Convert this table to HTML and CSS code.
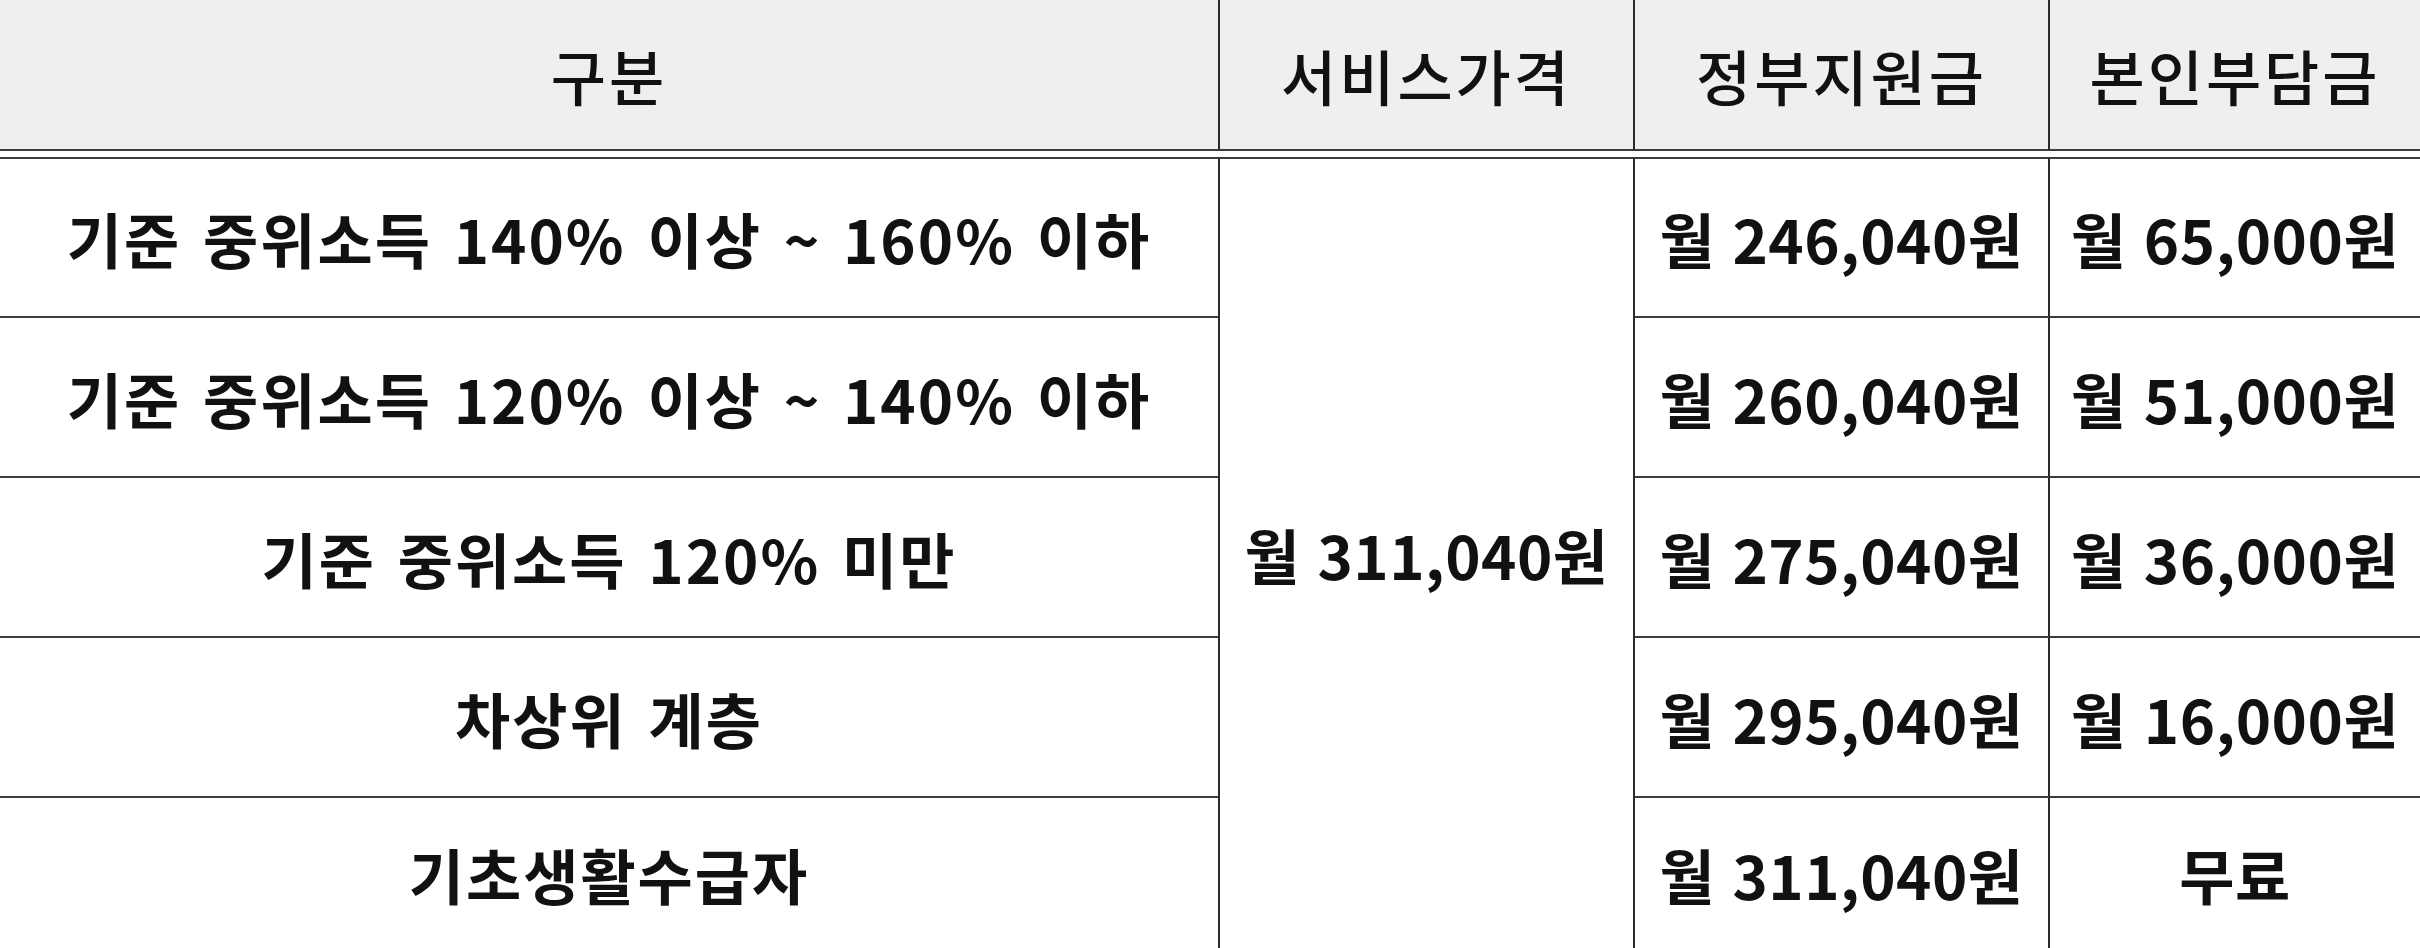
FILE: index.html
```html
<!DOCTYPE html>
<html lang="ko">
<head>
<meta charset="utf-8">
<title>서비스 가격표</title>
<link rel="stylesheet" href="styles.css">
</head>
<body>
<div class="price-table">
  <div class="cell head">구분</div>
  <div class="cell head col-price">서비스가격</div>
  <div class="cell head col-gov">정부지원금</div>
  <div class="cell head">본인부담금</div>

  <div class="gap"></div>

  <div class="cell body first wide">기준 중위소득 140% 이상 ~ 160% 이하</div>
  <div class="cell body merged col-price">월 311,040원</div>
  <div class="cell body first col-gov">월 246,040원</div>
  <div class="cell body first">월 65,000원</div>

  <div class="cell body wide">기준 중위소득 120% 이상 ~ 140% 이하</div>
  <div class="cell body col-gov">월 260,040원</div>
  <div class="cell body">월 51,000원</div>

  <div class="cell body wide">기준 중위소득 120% 미만</div>
  <div class="cell body col-gov">월 275,040원</div>
  <div class="cell body">월 36,000원</div>

  <div class="cell body wide">차상위 계층</div>
  <div class="cell body col-gov">월 295,040원</div>
  <div class="cell body">월 16,000원</div>

  <div class="cell body last wide">기초생활수급자</div>
  <div class="cell body last col-gov">월 311,040원</div>
  <div class="cell body last">무료</div>
</div>
</body>
</html>
```
FILE: styles.css
```css
html, body {
  margin: 0;
  padding: 0;
  background: #ffffff;
  overflow: hidden;
}

.price-table {
  display: grid;
  width: 2420px;
  grid-template-columns: 1218px 417px 415px 1fr;
  grid-template-rows: 151px 6px 161px 160px 160px 160px 150px;
  font-family: "Noto Sans CJK KR", "Noto Sans", sans-serif;
  color: #111111;
}

.cell {
  box-sizing: border-box;
  display: flex;
  align-items: center;
  justify-content: center;
  white-space: nowrap;
  font-size: 60px;
  letter-spacing: 0.5px;
}

.head {
  background: #efefef;
  border-bottom: 2px solid #3d3d3d;
  font-weight: 500;
  letter-spacing: 3px;
}

.gap {
  grid-column: 1 / -1;
}

.body {
  background: #ffffff;
  font-weight: 700;
  border-bottom: 2px solid #3d3d3d;
}

.body.wide {
  letter-spacing: 2px;
  word-spacing: 3px;
}

.body.first {
  border-top: 2px solid #3d3d3d;
}

.body.last {
  border-bottom: none;
}

.col-price {
  border-left: 2px solid #2a2a2a;
  border-right: 2px solid #2a2a2a;
}

.col-gov {
  border-right: 2px solid #2a2a2a;
}

.merged {
  grid-row: span 5;
  border-top: 2px solid #3d3d3d;
  border-bottom: none;
}
```
